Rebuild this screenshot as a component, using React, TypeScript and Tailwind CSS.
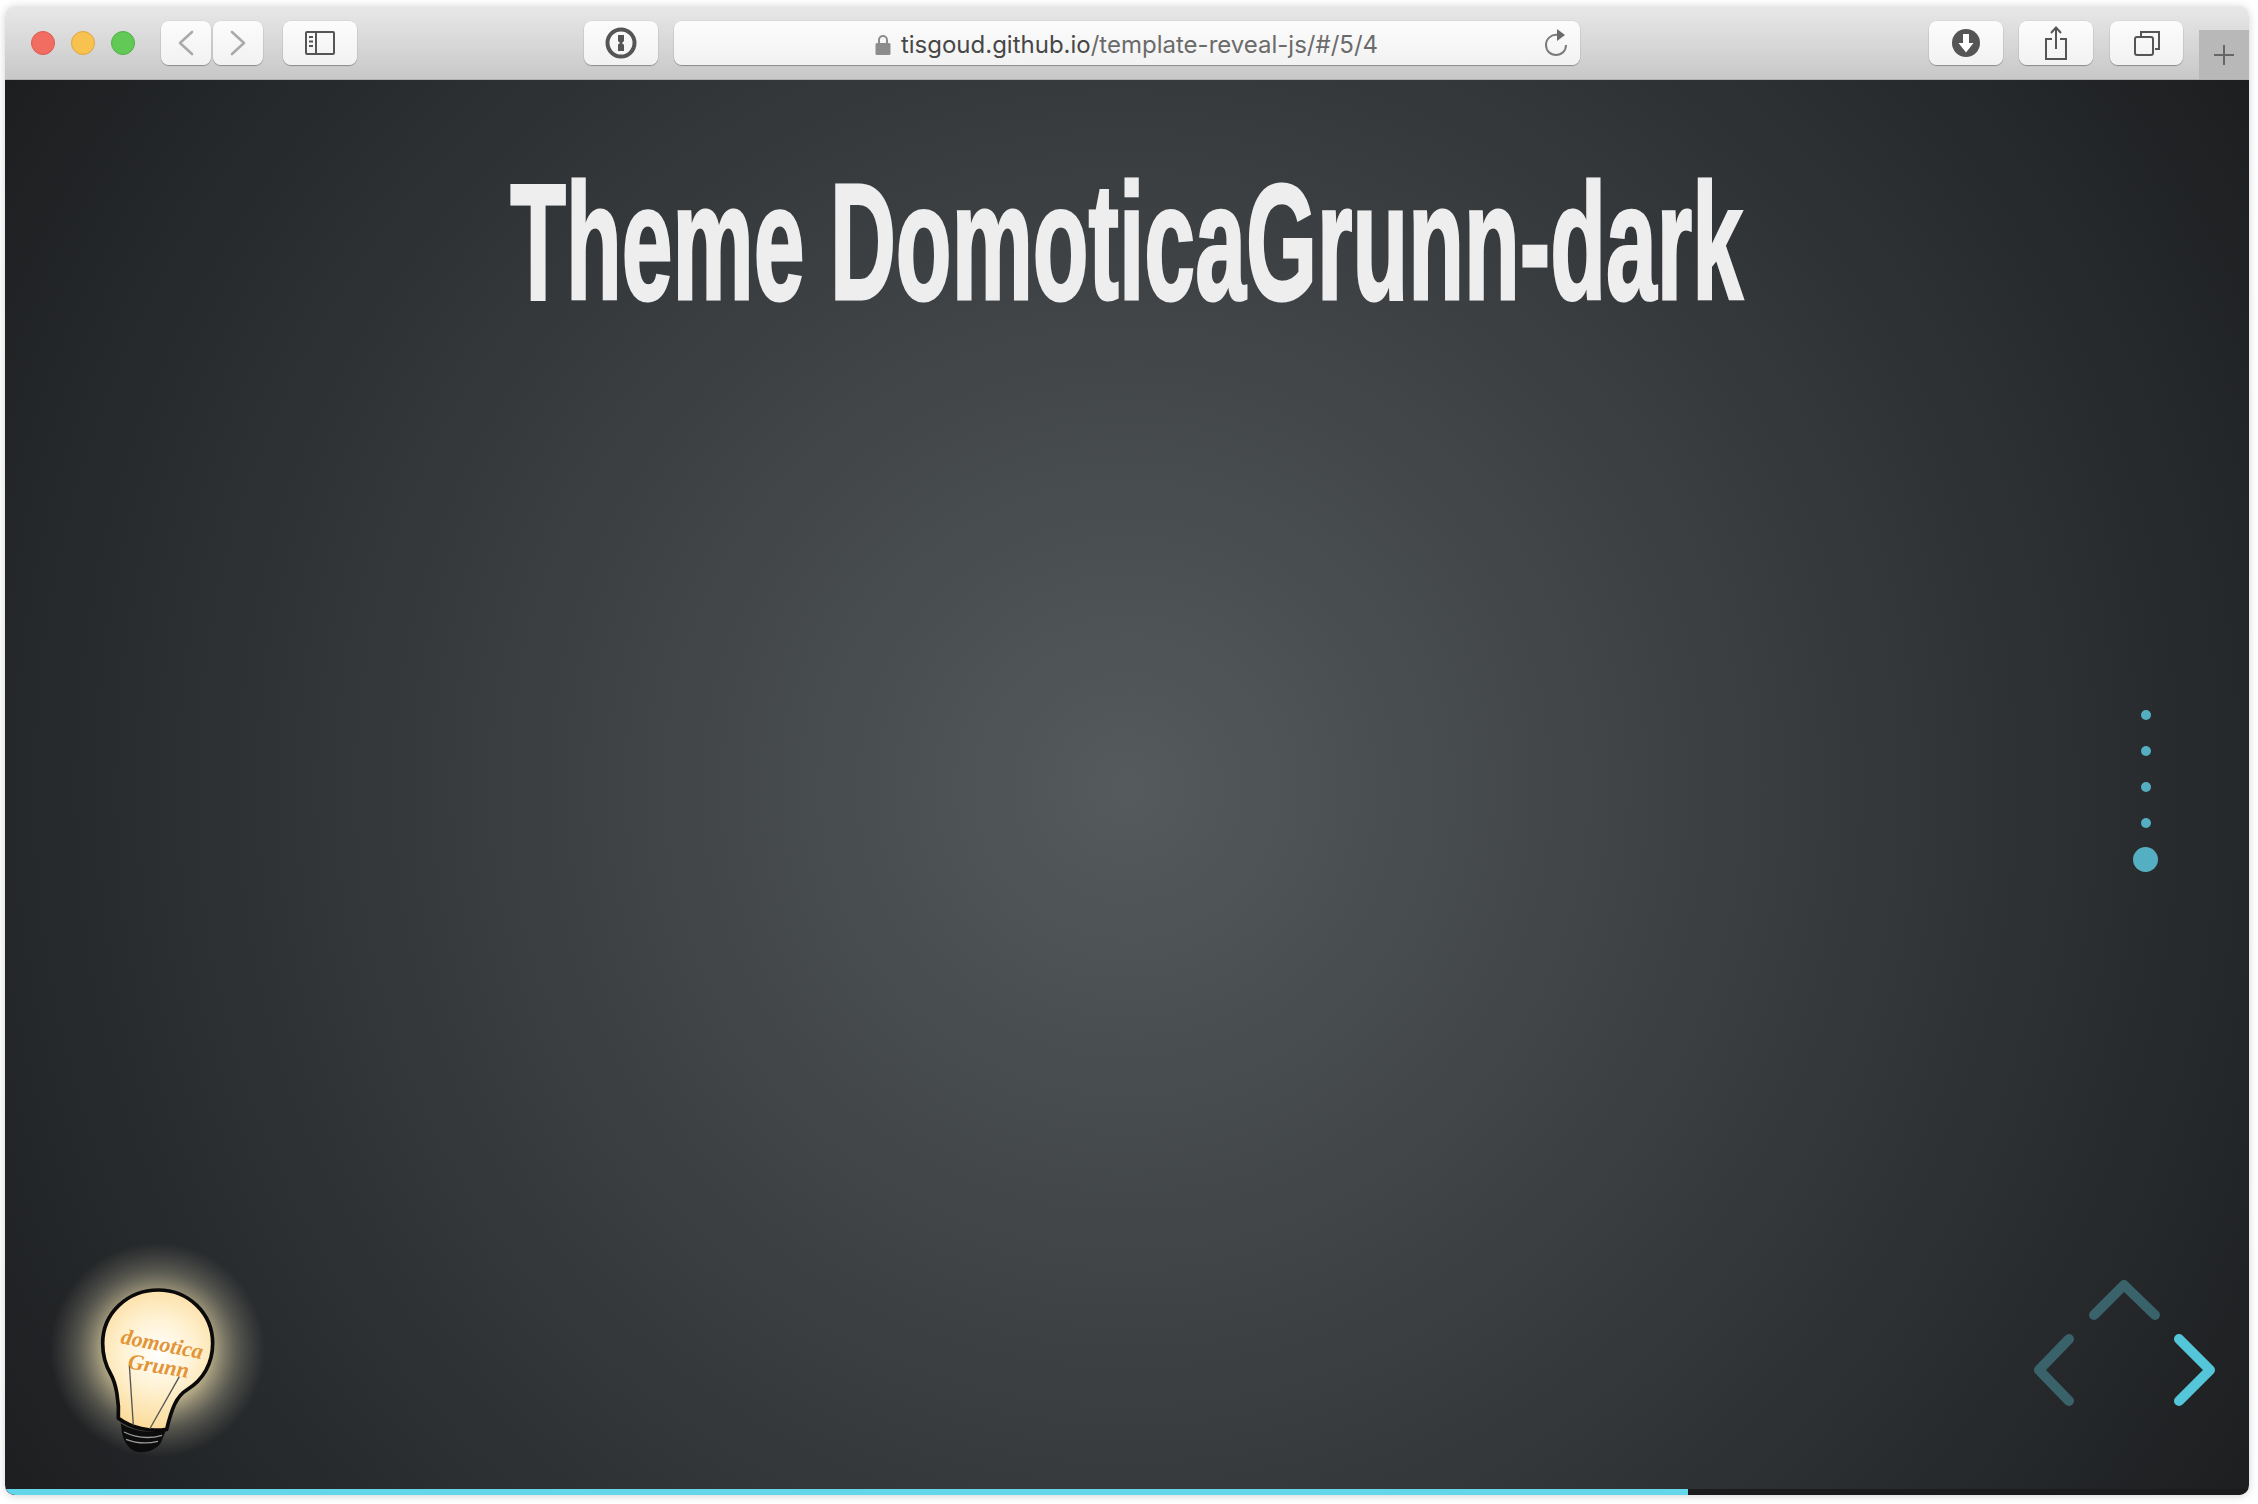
const ToolButton = ({ className = "", children }: { className?: string; children?: React.ReactNode }) => (
  <div
    className={`h-[44px] flex items-center justify-center rounded-[8px] bg-gradient-to-b from-[#fcfcfc] to-[#f2f2f2] shadow-[0_1px_1px_rgba(0,0,0,0.3),0_0_0_0.5px_rgba(0,0,0,0.08)] ${className}`}
  >
    {children}
  </div>
);

function Bulb() {
  return (
    <svg viewBox="0 0 780 795" className="absolute left-[25px] bottom-0 w-[260px] h-[265px]">
      <defs>
        <radialGradient id="glow" cx="382" cy="360" r="322" gradientUnits="userSpaceOnUse">
          <stop offset="0" stopColor="#fff3cf" stopOpacity="0.95" />
          <stop offset="0.5" stopColor="#e8d9a8" stopOpacity="0.72" />
          <stop offset="0.75" stopColor="#a9a48c" stopOpacity="0.36" />
          <stop offset="1" stopColor="#8a8a80" stopOpacity="0" />
        </radialGradient>
        <radialGradient id="bulbFill" cx="385" cy="370" r="220" gradientUnits="userSpaceOnUse">
          <stop offset="0" stopColor="#ffffff" />
          <stop offset="0.45" stopColor="#fff3d6" />
          <stop offset="1" stopColor="#fbdc9c" />
        </radialGradient>
      </defs>
      <circle cx="382" cy="360" r="322" fill="url(#glow)" />
      <path
        d="M265 565 C268 515 258 460 242 432 C226 405 218 375 218 340 C218 250 292 180 385 180 C475 180 548 250 548 340 C548 400 520 450 470 480 C440 498 425 535 410 598 C360 606 305 595 265 565 Z"
        fill="url(#bulbFill)"
        stroke="#0a0a0a"
        strokeWidth="11"
        strokeLinejoin="round"
      />
      <path d="M298 405 L310 586 M448 440 L359 597" stroke="#555" strokeWidth="4" fill="none" />
      <path
        d="M272 580 C310 604 360 612 408 600 L392 640 C378 660 345 672 315 664 C295 656 282 635 276 610 Z"
        fill="#0c0c0c"
      />
      <path
        d="M282 606 C315 622 355 628 396 616 M288 628 C318 640 350 642 384 634"
        stroke="#9a9a9a"
        strokeWidth="4"
        fill="none"
      />
      <text
        x="270"
        y="340"
        transform="rotate(11 270 340)"
        className="font-['Liberation_Serif',serif] italic font-bold text-[66px]"
        fill="#e29436"
      >
        domotica
      </text>
      <text
        x="292"
        y="415"
        transform="rotate(9 292 415)"
        className="font-['Liberation_Serif',serif] italic font-bold text-[66px]"
        fill="#e29436"
      >
        Grunn
      </text>
    </svg>
  );
}

export default function App() {
  return (
    <div className="w-[2258px] h-[1504px] bg-white pt-[6px] pl-[5px] overflow-hidden font-['Inter',sans-serif]">
      <div className="w-[2244px] h-[1489px] flex flex-col rounded-[10px] overflow-hidden shadow-[0_1px_8px_rgba(0,0,0,0.18)]">
        {/* toolbar */}
        <div className="h-[74px] shrink-0 flex items-start pt-[15px] bg-gradient-to-b from-[#e8e8e8] to-[#c8c8c8] border-b border-[#b0b0b0]">
          <div className="flex items-center gap-[16px] ml-[26px] h-[44px]">
            <div className="w-[24px] h-[24px] rounded-full bg-[#f26d61] border border-[#dc5b50]" />
            <div className="w-[24px] h-[24px] rounded-full bg-[#f8c251] border border-[#dfa63c]" />
            <div className="w-[24px] h-[24px] rounded-full bg-[#62c956] border border-[#4fb046]" />
          </div>
          <div className="flex gap-[2px] ml-[26px]">
            <ToolButton className="w-[50px]">
              <svg width="20" height="28" viewBox="0 0 20 28" fill="none" stroke="#aaaaaa" strokeWidth="2.6" strokeLinecap="round" strokeLinejoin="round">
                <path d="M16 3 L4 14 L16 25" />
              </svg>
            </ToolButton>
            <ToolButton className="w-[50px]">
              <svg width="20" height="28" viewBox="0 0 20 28" fill="none" stroke="#aaaaaa" strokeWidth="2.6" strokeLinecap="round" strokeLinejoin="round">
                <path d="M4 3 L16 14 L4 25" />
              </svg>
            </ToolButton>
          </div>
          <ToolButton className="w-[74px] ml-[20px]">
            <svg width="30" height="24" viewBox="0 0 30 24" fill="none" stroke="#555" strokeWidth="2">
              <rect x="1" y="1" width="28" height="22" rx="1" />
              <path d="M11 1 V23" />
              <path d="M4 6 H8 M4 10.5 H8 M4 15 H8" strokeWidth="2" />
            </svg>
          </ToolButton>
          <ToolButton className="w-[74px] ml-[227px]">
            <svg width="32" height="32" viewBox="0 0 32 32">
              <circle cx="16" cy="16" r="13.5" fill="none" stroke="#555" strokeWidth="4" />
              <path d="M13 8 H19 V14 L17 16 L19 18 V24 H13 V17.5 L15 16 L13 14 Z" fill="#555" />
            </svg>
          </ToolButton>
          <ToolButton className="w-[906px] ml-[16px] relative">
            <div className="flex items-center gap-[10px] text-[24px] leading-none -ml-[1px] mt-[3px]">
              <svg width="16" height="21" viewBox="0 0 16 21" fill="#8c8c8c">
                <path d="M3 9 V6 a5 5 0 0 1 10 0 V9 H11 V6 a3 3 0 0 0 -6 0 V9 Z" />
                <rect x="0.5" y="9" width="15" height="12" rx="1.5" />
              </svg>
              <span className="text-[#474747]">
                tisgoud.github.io<span className="text-[#6b6b6b]">/template-reveal-js/#/5/4</span>
              </span>
            </div>
            <svg className="absolute right-[12px] top-[7px]" width="24" height="30" viewBox="0 0 24 30" fill="none">
              <path d="M14 7 C7 6 2 11 2 17 C2 23 6.5 27 12 27 C17.5 27 22 23 22 17" stroke="#7a7a7a" strokeWidth="2" />
              <path d="M13 1 L21 7 L13 13 Z" fill="#6a6a6a" />
            </svg>
          </ToolButton>
          <ToolButton className="w-[74px] ml-[349px]">
            <svg width="30" height="30" viewBox="0 0 30 30">
              <circle cx="15" cy="15" r="14" fill="#555" />
              <path d="M12 6 H18 V15 H22.5 L15 24.5 L7.5 15 H12 Z" fill="#fff" />
            </svg>
          </ToolButton>
          <ToolButton className="w-[74px] ml-[16px]">
            <svg width="24" height="34" viewBox="0 0 24 34" fill="none" stroke="#555" strokeWidth="2">
              <path d="M8 13 H2 V33 H22 V13 H16" />
              <path d="M12 23 V2 M7 7 L12 1.5 L17 7" />
            </svg>
          </ToolButton>
          <ToolButton className="w-[73px] ml-[17px]">
            <svg width="26" height="26" viewBox="0 0 26 26" fill="none" stroke="#555" strokeWidth="2">
              <path d="M7 6 V2 H25 V19 H21" />
              <rect x="1" y="7" width="18" height="18" rx="2" />
            </svg>
          </ToolButton>
          <div className="w-[50px] h-[49px] mt-[9px] ml-[16px] bg-[#b8b8b8] flex items-center justify-center self-start">
            <svg width="24" height="24" viewBox="0 0 24 24" stroke="#666" strokeWidth="2">
              <path d="M12 2 V22 M2 12 H22" />
            </svg>
          </div>
        </div>

        {/* slide */}
        <div className="relative flex-1 flex flex-col items-center overflow-hidden bg-[radial-gradient(circle,#555a5d,#1c1e20)]">
          <h1 className="mt-[67px] text-[166px] leading-[1.15] font-bold whitespace-nowrap text-[#eeeeee] scale-x-[0.55] font-['Liberation_Sans',sans-serif] [-webkit-text-stroke:3px_#eeeeee]">
            Theme DomoticaGrunn-dark
          </h1>

          {/* vertical dots */}
          <div className="absolute left-[2128px] top-[630px] w-[25px] flex flex-col items-center gap-[26px]">
            <div className="w-[10px] h-[10px] rounded-full bg-[#55afc2]" />
            <div className="w-[10px] h-[10px] rounded-full bg-[#55afc2]" />
            <div className="w-[10px] h-[10px] rounded-full bg-[#55afc2]" />
            <div className="w-[10px] h-[10px] rounded-full bg-[#55afc2]" />
            <div className="w-[25px] h-[25px] -mt-[7px] rounded-full bg-[#55afc2]" />
          </div>

          <Bulb />

          {/* controls */}
          <svg className="absolute right-[30px] bottom-[86px] w-[190px] h-[130px]" viewBox="0 0 190 130" fill="none" strokeWidth="10" strokeLinecap="round" strokeLinejoin="round">
            <path d="M65 36 L95 6 L126 36" stroke="#3a626b" />
            <path d="M40 60 L10 91 L40 122" stroke="#3a626b" />
            <path d="M150 60 L181 91 L150 122" stroke="#55c5da" />
          </svg>

          {/* progress */}
          <div className="absolute left-0 right-0 bottom-0 h-[6px] bg-[#1a1b1d]">
            <div className="w-[1683px] h-full bg-[#64d6ea]" />
          </div>
        </div>
      </div>
    </div>
  );
}
